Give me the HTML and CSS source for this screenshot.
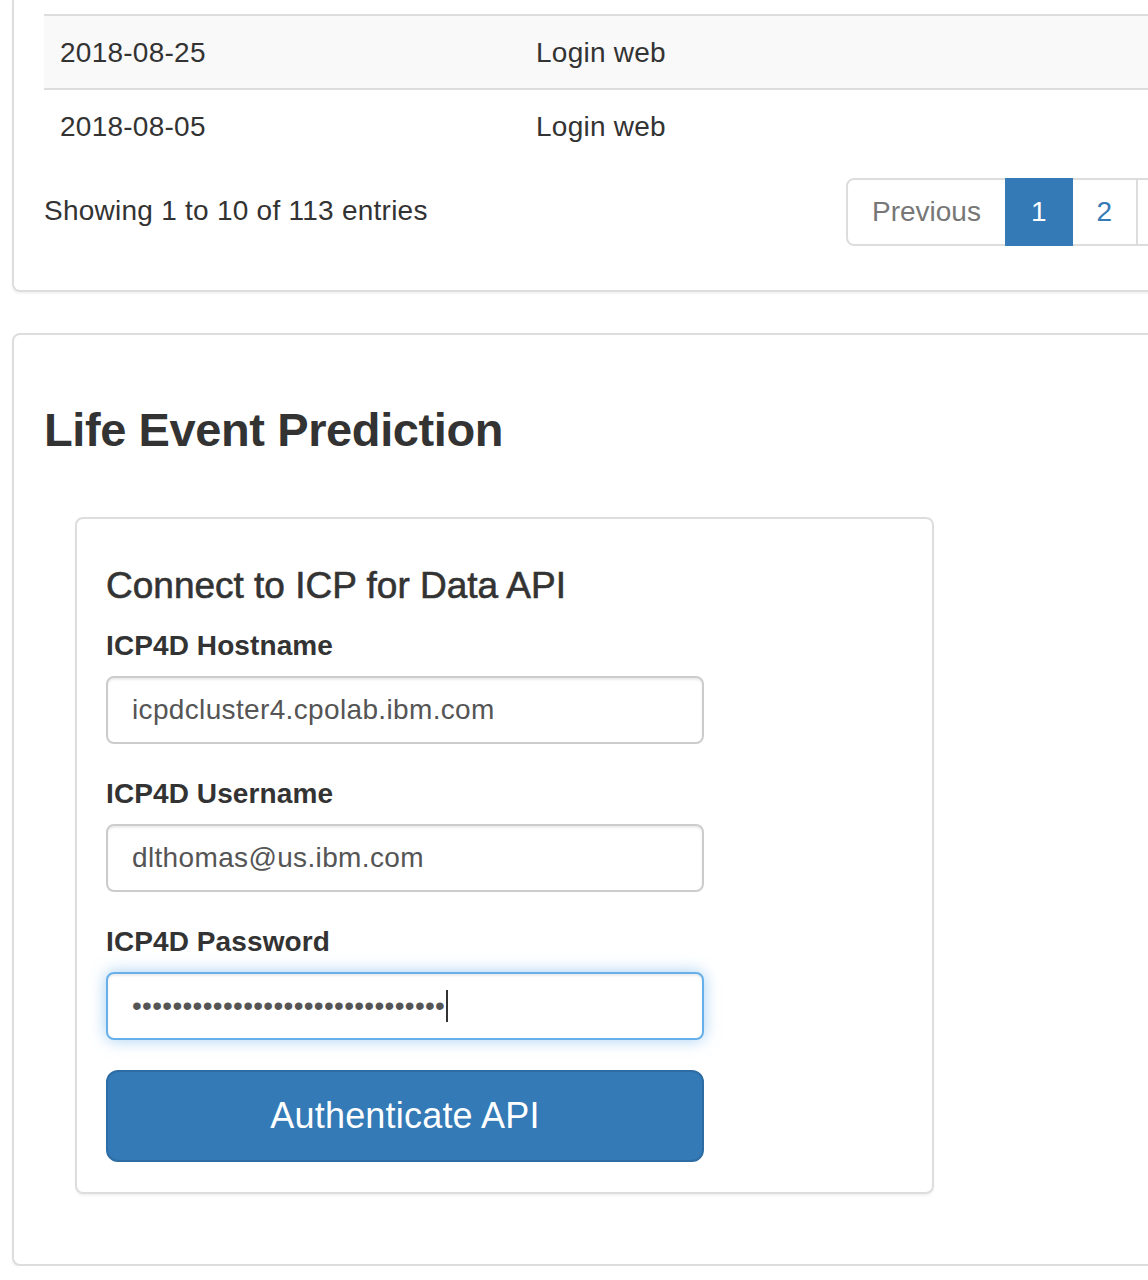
FILE: index.html
```html
<!DOCTYPE html>
<html lang="en">
<head>
<meta charset="utf-8">
<title>Life Event Prediction</title>
<link rel="stylesheet" href="styles.css">
</head>
<body>
<div class="page">
  <section class="card card-top">
    <table class="data-table">
      <tbody>
        <tr class="odd"><td class="col-date">2018-08-25</td><td>Login web</td></tr>
        <tr><td class="col-date">2018-08-05</td><td>Login web</td></tr>
      </tbody>
    </table>
    <div class="table-footer">
      <div class="info">Showing 1 to 10 of 113 entries</div>
      <ul class="pagination">
        <li class="disabled"><span>Previous</span></li>
        <li class="active"><span>1</span></li>
        <li><span>2</span></li>
        <li class="more"><span></span></li>
      </ul>
    </div>
  </section>

  <section class="card card-main">
    <h3 class="title">Life Event Prediction</h3>
    <div class="inner-card">
      <h4 class="subtitle">Connect to ICP for Data API</h4>
      <form class="form">
        <div class="form-group">
          <label class="label" for="host">ICP4D Hostname</label>
          <input class="form-control" id="host" type="text" value="icpdcluster4.cpolab.ibm.com">
        </div>
        <div class="form-group">
          <label class="label" for="user">ICP4D Username</label>
          <input class="form-control" id="user" type="text" value="dlthomas@us.ibm.com">
        </div>
        <div class="form-group">
          <label class="label">ICP4D Password</label>
          <div class="form-control focused"><span class="dots">•••••••••••••••••••••••••••••••</span><span class="caret"></span></div>
        </div>
        <button class="btn-primary" type="button">Authenticate API</button>
      </form>
    </div>
  </section>
</div>
</body>
</html>
```

FILE: styles.css
```css
html, body {
  margin: 0;
  padding: 0;
  overflow: hidden;
  background: #fff;
}

body {
  font-family: "Liberation Sans", Arial, Helvetica, sans-serif;
  font-size: 28px;
  line-height: 40px;
  color: #333;
  letter-spacing: 0.25px;
}

.page {
  width: 1500px;
  padding-left: 12px;
}

.card {
  border: 2px solid #ddd;
  border-radius: 8px;
  box-shadow: 0 2px 2px rgba(0, 0, 0, 0.05);
  background: #fff;
  padding: 0 30px;
}

.card-top {
  border-top: none;
  border-top-left-radius: 0;
  border-top-right-radius: 0;
  padding-top: 14px;
  padding-bottom: 44px;
}

.data-table {
  width: 100%;
  border-collapse: collapse;
}

.data-table td {
  border-top: 2px solid #ddd;
  padding: 17px 16px 15px;
  line-height: 40px;
  vertical-align: top;
}

.data-table tr.odd td {
  background: #f9f9f9;
}

.data-table .col-date {
  width: 444px;
}

.table-footer {
  display: flex;
  align-items: flex-start;
  margin-top: 16px;
}

.info {
  width: 802px;
  padding-top: 13px;
}

.pagination {
  display: flex;
  list-style: none;
  margin: 0;
  padding: 0;
  letter-spacing: 0;
}

.pagination li span {
  display: block;
  padding: 12px 24px;
  line-height: 40px;
  border: 2px solid #ddd;
  margin-left: -2px;
  color: #337ab7;
  background: #fff;
}

.pagination li:first-child span {
  margin-left: 0;
  border-top-left-radius: 8px;
  border-bottom-left-radius: 8px;
}

.pagination li.disabled span {
  color: #777;
}

.pagination li.active span {
  background: #337ab7;
  border-color: #337ab7;
  color: #fff;
  position: relative;
}

.pagination li.more span {
  width: 40px;
  height: 40px;
}

.card-main {
  margin-top: 41px;
  padding-top: 30px;
  padding-bottom: 70px;
}

.title {
  margin: 39px 0 20px;
  font-size: 47px;
  line-height: 52px;
  font-weight: bold;
  letter-spacing: -0.4px;
  color: #333;
}

.inner-card {
  margin-top: 61px;
  margin-left: 31px;
  width: 796px;
  border: 2px solid #ddd;
  border-radius: 8px;
  box-shadow: 0 2px 2px rgba(0, 0, 0, 0.05);
  padding: 30px 30px 30px 29px;
}

.subtitle {
  margin: 17px 0 20px;
  font-size: 37px;
  line-height: 40px;
  font-weight: normal;
  letter-spacing: 0;
  -webkit-text-stroke: 0.6px #333;
  color: #333;
}

.form {
  width: 598px;
}

.form-group {
  margin-bottom: 30px;
}

.label {
  display: block;
  font-weight: bold;
  margin-bottom: 10px;
  letter-spacing: 0.1px;
}

.form-control {
  display: block;
  box-sizing: border-box;
  width: 100%;
  height: 68px;
  padding: 12px 24px;
  font-family: inherit;
  font-size: 28px;
  line-height: 40px;
  letter-spacing: 0.35px;
  color: #555;
  background: #fff;
  border: 2px solid #ccc;
  border-radius: 8px;
  box-shadow: inset 0 2px 2px rgba(0, 0, 0, 0.075);
  outline: none;
  margin: 0;
}

.form-control.focused {
  border-color: #66afe9;
  box-shadow: inset 0 2px 2px rgba(0, 0, 0, 0.075), 0 0 16px rgba(102, 175, 233, 0.6);
  display: flex;
  align-items: center;
}

.dots {
  letter-spacing: 0.3px;
  color: #555;
}

.caret {
  display: inline-block;
  width: 2px;
  height: 32px;
  background: #333;
  margin-left: 1px;
}

.btn-primary {
  display: block;
  box-sizing: border-box;
  width: 100%;
  height: 92px;
  padding: 20px 32px;
  font-family: inherit;
  font-size: 36px;
  line-height: 48px;
  letter-spacing: 0.2px;
  color: #fff;
  background: #337ab7;
  border: 2px solid #2e6da4;
  border-radius: 12px;
  cursor: pointer;
}
```
